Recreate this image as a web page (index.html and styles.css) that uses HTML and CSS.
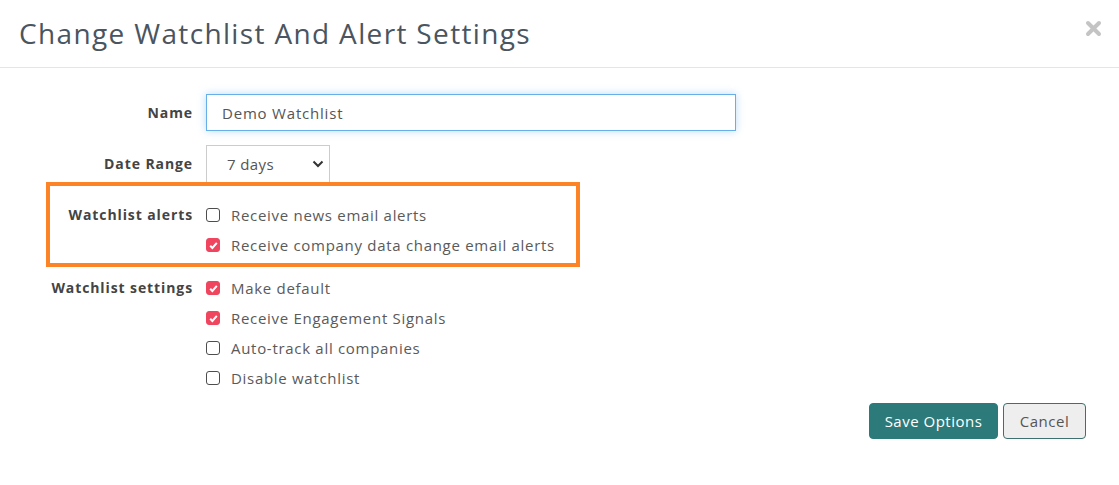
FILE: index.html
```html
<!DOCTYPE html>
<html>
<head>
<meta charset="utf-8">
<link rel="stylesheet" href="styles.css">
</head>
<body>
<div class="modal">
  <div class="modal-header">
    <h1 class="title">Change Watchlist And Alert Settings</h1>
    <span class="close" aria-label="close">
      <svg width="17" height="17" viewBox="0 0 17 17"><path d="M3 3 L14 14 M14 3 L3 14" stroke="#c4c4c4" stroke-width="4" stroke-linecap="round"/></svg>
    </span>
  </div>
  <div class="modal-body">
    <div class="row">
      <label class="label">Name</label>
      <div class="control"><div class="input">Demo Watchlist</div></div>
    </div>
    <div class="row row-date">
      <label class="label">Date Range</label>
      <div class="control">
        <div class="select">
          <span>7 days</span>
          <svg class="chev" width="12" height="8" viewBox="0 0 12 8"><path d="M1.5 1.5 L6 6 L10.5 1.5" fill="none" stroke="#333" stroke-width="2"/></svg>
        </div>
      </div>
    </div>
    <div class="highlight">
      <div class="row row-check">
        <label class="label">Watchlist alerts</label>
        <div class="checks">
          <div class="check"><span class="box"></span><span class="ctext">Receive news email alerts</span></div>
          <div class="check"><span class="box on"><svg width="13" height="13" viewBox="0 0 13 13"><path d="M3.2 6.8 L5.4 9 L9.8 3.8" fill="none" stroke="#fff" stroke-width="2"/></svg></span><span class="ctext">Receive company data change email alerts</span></div>
        </div>
      </div>
    </div>
    <div class="row row-check settings">
      <label class="label">Watchlist settings</label>
      <div class="checks">
        <div class="check"><span class="box on"><svg width="13" height="13" viewBox="0 0 13 13"><path d="M3.2 6.8 L5.4 9 L9.8 3.8" fill="none" stroke="#fff" stroke-width="2"/></svg></span><span class="ctext">Make default</span></div>
        <div class="check"><span class="box on"><svg width="13" height="13" viewBox="0 0 13 13"><path d="M3.2 6.8 L5.4 9 L9.8 3.8" fill="none" stroke="#fff" stroke-width="2"/></svg></span><span class="ctext">Receive Engagement Signals</span></div>
        <div class="check"><span class="box"></span><span class="ctext">Auto-track all companies</span></div>
        <div class="check"><span class="box"></span><span class="ctext">Disable watchlist</span></div>
      </div>
    </div>
    <div class="actions">
      <button class="btn btn-primary">Save Options</button>
      <button class="btn btn-default">Cancel</button>
    </div>
  </div>
</div>
</body>
</html>
```

FILE: styles.css
```css
* { box-sizing: border-box; }
html, body { margin: 0; padding: 0; background: #fff; }
body {
  font-family: "Open Sans", "Noto Sans", "Liberation Sans", sans-serif;
  color: #555;
  font-size: 15px;
}
.modal { width: 1119px; height: 485px; background: #fff; }
.modal-header {
  height: 68px;
  border-bottom: 1px solid #e5e5e5;
  display: flex;
  align-items: center;
  justify-content: space-between;
  padding: 0 17px 0 19px;
}
.title {
  margin: 0;
  font-weight: 400;
  font-size: 28px;
  color: #4a5560;
  letter-spacing: 1.35px;
  line-height: 1;
  padding-bottom: 2px;
}
.close { display: flex; width: 17px; height: 17px; margin-bottom: 11px; }
.modal-body { padding-top: 26px; }
.row { display: flex; align-items: center; }
.label {
  width: 193px;
  flex: none;
  text-align: right;
  font-weight: 700;
  color: #444;
  font-size: 14px;
  letter-spacing: 0.9px;
}
.control { margin-left: 13px; }
.input {
  width: 530px;
  height: 37px;
  border: 1px solid #66afe9;
  box-shadow: 0 0 8px rgba(102, 175, 233, 0.45);
  padding: 0 15px;
  display: flex;
  align-items: center;
  color: #555;
  letter-spacing: 0.8px;
}
.row-date { margin-top: 14px; }
.select {
  width: 124px;
  height: 37px;
  border: 1px solid #ccc;
  border-bottom: none;
  display: flex;
  align-items: center;
  justify-content: space-between;
  padding: 0 5px 0 20px;
  letter-spacing: 0.4px;
}
.highlight {
  margin-left: 46px;
  width: 534px;
  border: 4px solid #fd8426;
  padding: 14px 0 3px;
}
.highlight .label { width: 143px; }
.row-check { align-items: flex-start; }
.row-check .label { line-height: 30px; }
.checks { margin-left: 13px; display: flex; flex-direction: column; }
.check { height: 30px; display: flex; align-items: center; }
.box {
  width: 14px;
  height: 14px;
  border: 1.5px solid #4d4d4d;
  border-radius: 3px;
  margin-right: 11px;
  display: flex;
  align-items: center;
  justify-content: center;
  flex: none;
}
.box.on { background: #f0455e; border-color: #f0455e; }
.box.on svg { flex: none; margin: -2px; }
.ctext { letter-spacing: 0.7px; color: #5a5a5a; }
.settings { margin-top: 6px; }
.actions {
  display: flex;
  justify-content: flex-end;
  gap: 5px;
  padding-right: 33px;
  margin-top: 10px;
}
.btn {
  font-family: inherit;
  font-size: 15px;
  height: 36px;
  border-radius: 4px;
  padding: 0 10px;
  cursor: pointer;
  letter-spacing: 0.5px;
}
.btn-primary { background: #2d7a7a; color: #fff; border: 1px solid #2d7a7a; width: 129px; }
.btn-default { background: #eee; color: #555; border: 1px solid #3d7070; width: 83px; }
```
